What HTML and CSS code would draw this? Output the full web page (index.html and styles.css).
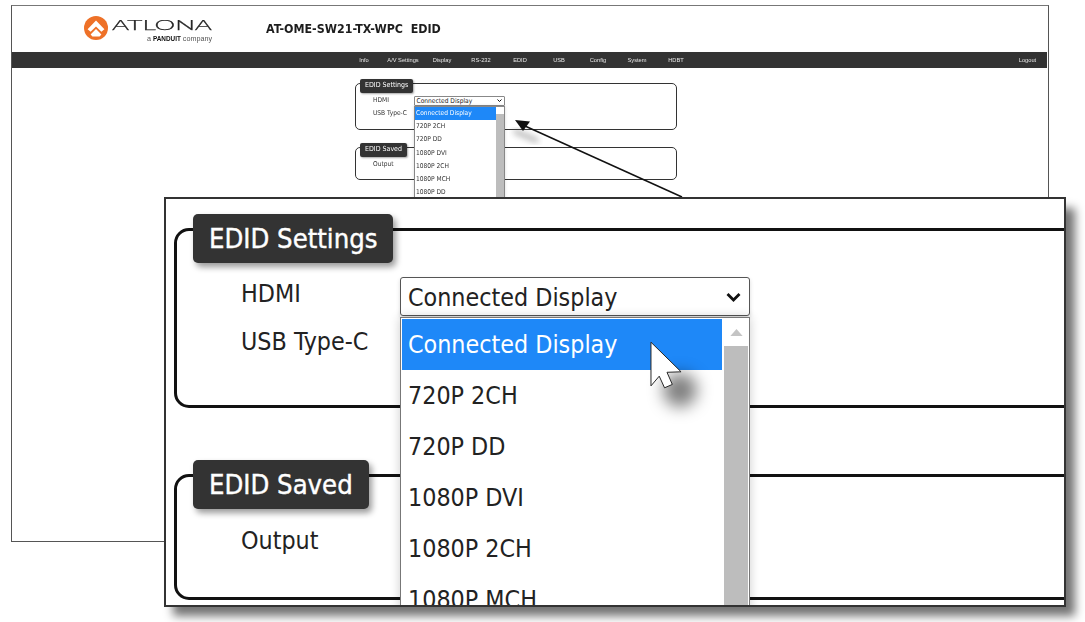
FILE: index.html
```html
<!DOCTYPE html>
<html lang="en">
<head>
<meta charset="utf-8">
<title>AT-OME-SW21-TX-WPC EDID</title>
<link rel="stylesheet" href="styles.css">
</head>
<body>
<main class="stage">
  <section class="page">
    <header class="page-head">
      <div class="logo">
        <svg class="logo-mark" viewBox="0 0 24 24" aria-hidden="true">
          <circle cx="12" cy="12" r="12" fill="#ee7128"/>
          <path d="M3.6 13.2 12 4.6l8.400 8.600-3 2.600L12 10.400l-5.400 5.400z" fill="#fff"/>
          <path d="M6.600 18.400 12 13l5.400 5.400-1.800 2H8.400z" fill="#fff"/>
        </svg>
        <div class="logo-words">
          <svg class="logo-name" viewBox="0 0 100 12"><text x="0" y="11" textLength="100" lengthAdjust="spacingAndGlyphs">ATLONA</text></svg>
          <div class="logo-sub">a <b>PANDUIT</b> company</div>
        </div>
      </div>
      <h1 class="title">AT-OME-SW21-TX-WPC&nbsp;&nbsp;EDID</h1>
    </header>
    <nav class="nav">
      <a>Info</a><a>A/V Settings</a><a>Display</a><a>RS-232</a><a>EDID</a><a>USB</a><a>Config</a><a>System</a><a>HDBT</a>
      <a class="logout">Logout</a>
    </nav>
    <div class="sm-content">
      <div class="sm-set sm-set-a">
        <div class="sm-legend">EDID Settings</div>
        <div class="sm-row"><span class="sm-label">HDMI</span>
          <div class="sm-select">Connected Display
            <svg viewBox="0 0 10 6"><path d="M1 1l4 4 4-4" fill="none" stroke="#111" stroke-width="2"/></svg>
          </div>
        </div>
        <div class="sm-row sm-row-b"><span class="sm-label">USB Type-C</span></div>
        <div class="sm-list">
          <div class="sm-opts">
            <div class="sm-opt on">Connected Display</div>
            <div class="sm-opt">720P 2CH</div>
            <div class="sm-opt">720P DD</div>
            <div class="sm-opt">1080P DVI</div>
            <div class="sm-opt">1080P 2CH</div>
            <div class="sm-opt">1080P MCH</div>
            <div class="sm-opt">1080P DD</div>
          </div>
          <div class="sm-scroll"></div>
        </div>
      </div>
      <div class="sm-set sm-set-b">
        <div class="sm-legend">EDID Saved</div>
        <div class="sm-row"><span class="sm-label">Output</span></div>
      </div>
    </div>
  </section>

  <svg class="pointer" viewBox="0 0 200 100" aria-hidden="true">
    <defs><filter id="ps" x="-20%" y="-40%" width="140%" height="180%"><feGaussianBlur stdDeviation="3"/></filter></defs>
    <path d="M6 14 30 24" stroke="#555" stroke-width="5" opacity=".45" filter="url(#ps)"/>
    <path d="M17 9 174 80" stroke="#111" stroke-width="1.5"/>
    <path d="M7 3 22 4.500 15 14z" fill="#111"/>
  </svg>

  <section class="panel">
    <div class="lg-set lg-set-a">
      <div class="lg-legend">EDID Settings</div>
      <div class="lg-row"><span class="lg-label">HDMI</span>
        <div class="lg-select">Connected Display
          <svg viewBox="0 0 16 10"><path d="M2 2l6 6 6-6" fill="none" stroke="#111" stroke-width="2.800"/></svg>
        </div>
      </div>
      <div class="lg-row lg-row-b"><span class="lg-label">USB Type-C</span></div>
    </div>
    <div class="lg-set lg-set-b">
      <div class="lg-legend">EDID Saved</div>
      <div class="lg-row lg-row-c"><span class="lg-label">Output</span></div>
    </div>
    <div class="lg-list">
      <div class="lg-opts">
        <div class="lg-opt on">Connected Display</div>
        <div class="lg-opt">720P 2CH</div>
        <div class="lg-opt">720P DD</div>
        <div class="lg-opt">1080P DVI</div>
        <div class="lg-opt">1080P 2CH</div>
        <div class="lg-opt">1080P MCH</div>
      </div>
      <div class="lg-scroll">
        <div class="lg-up"><svg viewBox="0 0 14 8"><path d="M7 0l7 8H0z" fill="#c4c4c4"/></svg></div>
        <div class="lg-thumb"></div>
      </div>
    </div>
    <div class="cursor-shadow"></div>
    <svg class="cursor" viewBox="0 0 34 50" aria-hidden="true">
      <path d="M1 1V46L9.500 36 15 48 23 44.500 17.500 32 32 31.500z" fill="#fff" stroke="#222" stroke-width="1"/>
    </svg>
  </section>
</main>
</body>
</html>
```
FILE: styles.css
```css
* { box-sizing: border-box; }
html, body { margin: 0; padding: 0; background: #fff; }
body { font-family: "DejaVu Sans", "Liberation Sans", sans-serif; font-stretch: condensed; color: #222; }
.stage { position: relative; width: 1085px; height: 622px; overflow: hidden; background: #fff; isolation: isolate; z-index: 0; }

/* Small page screenshot */
.page { position: absolute; left: 11px; top: 5px; width: 1038px; height: 537px; border: 1px solid #555; border-top-color: #777; background: #fff; display: flex; flex-direction: column; }
.page-head { height: 46px; display: flex; align-items: center; flex: none; filter: blur(.25px); }
.logo { display: flex; align-items: center; gap: 4px; margin-left: 72px; width: 182px; }
.logo-mark { width: 24px; height: 24px; flex: none; margin-top: -2px; }
.logo-words { width: 100px; margin-top: 4px; }
.logo-name { display: block; width: 100px; height: 12px; overflow: visible; }
.logo-name text { font-family: "Lato", "Liberation Sans", sans-serif; font-weight: 300; font-size: 13px; fill: #222; stroke: #222; stroke-width: .25; }
.logo-sub { font-family: "Liberation Sans", sans-serif; font-size: 7.200px; color: #555; text-align: right; margin-top: 3px; white-space: nowrap; }
.logo-sub b { color: #111; font-weight: 700; font-size: 6.400px; }
.title { margin: 0; font-size: 12.350px; font-weight: 700; color: #1d1d1d; white-space: nowrap; }

.nav { height: 16px; flex: none; background: #333; display: flex; align-items: center; padding-left: 332.500px; margin-right: 1px; filter: blur(.25px); }
.nav a { width: 39px; text-align: center; font-family: "Liberation Sans", sans-serif; font-size: 5.700px; color: #e8e8e8; white-space: nowrap; }
.nav .logout { margin-left: auto; }

.sm-content { padding: 15px 0 0 343px; filter: blur(.25px); }
.sm-set { position: relative; width: 322px; border: 1px solid #333; border-radius: 5px; }
.sm-set-a { height: 47px; }
.sm-set-b { height: 33px; margin-top: 17px; }
.sm-legend { display: block; width: fit-content; margin: -5px 0 0 4px; height: 13.500px; line-height: 13.500px; padding: 0 5px; background: #333; color: #fff; font-size: 7px; border-radius: 2px; box-shadow: 1px 1px 2px rgba(0,0,0,.35); }
.sm-row { display: flex; align-items: flex-start; padding-left: 17px; height: 10px; }
.sm-set-a .sm-row { margin-top: 3.500px; }
.sm-set-a .sm-row-b { margin-top: 3px; }
.sm-set-b .sm-row { margin-top: 3px; }
.sm-label { width: 41px; font-size: 6.600px; line-height: 9px; color: #333; }
.sm-select { position: relative; width: 91px; height: 10px; border: 1px solid #888; border-radius: 1px; background: #fff; font-size: 6.600px; line-height: 8px; padding-left: 1.500px; }
.sm-select svg { position: absolute; right: 2px; top: 2px; width: 5px; height: 3px; }
.sm-list { position: absolute; left: 57.500px; top: 22px; width: 91px; height: 100px; border: 1px solid #888; background: #fff; display: flex; z-index: 1; box-shadow: 0 0 3px rgba(0,0,0,.15); }
.sm-opts { flex: 1; }
.sm-opt { height: 13.200px; line-height: 13.200px; padding-left: 1.500px; font-size: 6.600px; color: #333; }
.sm-opt.on { background: #1e88f8; color: #fff; }
.sm-scroll { width: 8px; background: linear-gradient(#fff 0, #fff 7px, #bdbdbd 7px); }

/* Pointer line */
.pointer { position: absolute; left: 508px; top: 117px; width: 200px; height: 100px; }

/* Zoomed panel */
.panel { position: absolute; left: 164px; top: 197px; width: 902px; height: 410px; border: 2px solid #333; background: #fff; overflow: hidden; padding: 29px 0 0 8px; }
.stage::after { content: ""; position: absolute; left: 173px; top: 208px; width: 902px; height: 408px; background: rgba(0,0,0,.55); filter: blur(5px); z-index: -1; }
.lg-set { margin-right: -20px; border: 3px solid #111; border-radius: 15px; }
.lg-set-a { height: 180px; }
.lg-set-b { height: 126px; margin-top: 66px; }
.lg-legend { display: block; width: fit-content; margin: -17px 0 0 16px; height: 49px; line-height: 49px; padding: 0 16px; background: #333; color: #fff; font-size: 27.200px; border-radius: 5px; box-shadow: 3px 4px 6px rgba(0,0,0,.4); -webkit-text-stroke: .4px #fff; }
.lg-row { display: flex; padding-left: 64px; }
.lg-label { width: 159px; font-size: 24.800px; line-height: 32px; color: #222; }
.lg-set-a .lg-row { margin-top: 15px; height: 39px; }
.lg-set-a .lg-row-b { margin-top: 9px; height: 32px; }
.lg-set-b .lg-row-c { margin-top: 16px; }
.lg-select { position: relative; width: 350px; height: 39px; border: 1px solid #555; border-radius: 3px; background: #fff; font-size: 24.800px; line-height: 39px; padding-left: 7px; margin-top: -1px; box-shadow: 0 2px 4px rgba(0,0,0,.15); }
.lg-select svg { position: absolute; right: 7px; top: 14px; width: 17px; height: 10px; }
.lg-list { position: absolute; left: 234px; top: 118px; width: 350px; height: 300px; border: 1px solid #777; background: #fff; display: flex; padding: 1px; box-shadow: 0 0 10px rgba(0,0,0,.2); }
.lg-opts { width: 320px; flex: none; }
.lg-opt { height: 51px; line-height: 51px; padding-left: 6px; font-size: 24.800px; color: #222; }
.lg-opt.on { background: #1e88f8; color: #fff; }
.lg-scroll { width: 24px; margin-left: 2px; display: flex; flex-direction: column; }
.lg-up { height: 27px; flex: none; display: flex; align-items: center; justify-content: center; }
.lg-up svg { width: 13px; height: 7px; }
.lg-thumb { flex: 1; background: #bdbdbd; }
.cursor-shadow { position: absolute; left: 497px; top: 174px; width: 34px; height: 34px; border-radius: 50%; background: rgba(0,0,0,.5); filter: blur(8px); z-index: 1; }
.cursor { position: absolute; left: 484px; top: 142px; width: 33px; height: 49px; z-index: 2; }
```
